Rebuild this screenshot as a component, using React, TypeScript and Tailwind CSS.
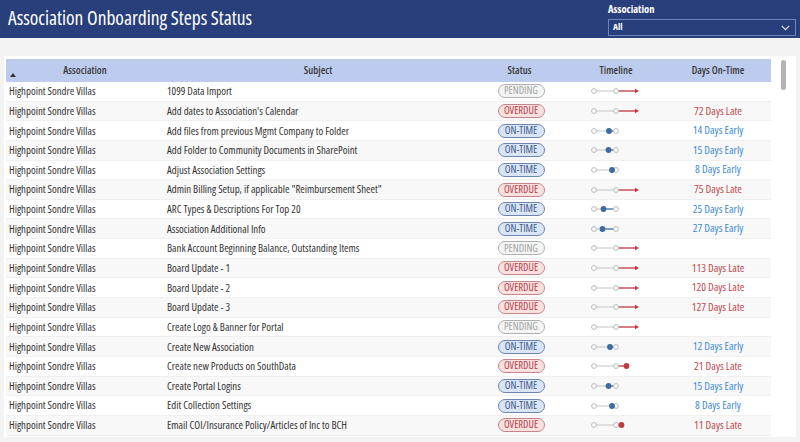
import React from 'react';

type Status = 'PENDING' | 'OVERDUE' | 'ON-TIME';

type Step = {
  subject: string;
  status: Status;
  // days relative to due date: negative = early, positive = late, null = not done
  days: number | null;
  label: string;
};

const steps: Step[] = [
  { subject: '1099 Data Import', status: 'PENDING', days: null, label: '' },
  { subject: "Add dates to Association's Calendar", status: 'OVERDUE', days: null, label: '72 Days Late' },
  { subject: 'Add files from previous Mgmt Company to Folder', status: 'ON-TIME', days: -14, label: '14 Days Early' },
  { subject: 'Add Folder to Community Documents in SharePoint', status: 'ON-TIME', days: -15, label: '15 Days Early' },
  { subject: 'Adjust Association Settings', status: 'ON-TIME', days: -8, label: '8 Days Early' },
  { subject: 'Admin Billing Setup, if applicable "Reimbursement Sheet"', status: 'OVERDUE', days: null, label: '75 Days Late' },
  { subject: 'ARC Types & Descriptions For Top 20', status: 'ON-TIME', days: -25, label: '25 Days Early' },
  { subject: 'Association Additional Info', status: 'ON-TIME', days: -27, label: '27 Days Early' },
  { subject: 'Bank Account Beginning Balance, Outstanding Items', status: 'PENDING', days: null, label: '' },
  { subject: 'Board Update - 1', status: 'OVERDUE', days: null, label: '113 Days Late' },
  { subject: 'Board Update - 2', status: 'OVERDUE', days: null, label: '120 Days Late' },
  { subject: 'Board Update - 3', status: 'OVERDUE', days: null, label: '127 Days Late' },
  { subject: 'Create Logo & Banner for Portal', status: 'PENDING', days: null, label: '' },
  { subject: 'Create New Association', status: 'ON-TIME', days: -12, label: '12 Days Early' },
  { subject: 'Create new Products on SouthData', status: 'OVERDUE', days: 21, label: '21 Days Late' },
  { subject: 'Create Portal Logins', status: 'ON-TIME', days: -15, label: '15 Days Early' },
  { subject: 'Edit Collection Settings', status: 'ON-TIME', days: -8, label: '8 Days Early' },
  { subject: 'Email COI/Insurance Policy/Articles of Inc to BCH', status: 'OVERDUE', days: 11, label: '11 Days Late' },
];

const pillStyles: Record<Status, string> = {
  PENDING: 'bg-[#f4f4f4] border-[#b0b0b0] text-[#a3a3a3]',
  OVERDUE: 'bg-[#fbe0e0] border-[#c5858a] text-[#b0434a]',
  'ON-TIME': 'bg-[#d9e4f4] border-[#6d86b1] text-[#3c5c8c]',
};

function Timeline({ days }: { days: number | null }) {
  const start = 27;
  const due = 49;
  const y = 6;
  const blue = '#3d6b9f';
  const red = '#c0393f';

  if (days === null) {
    return (
      <svg width="98" height="12" className="block">
        <line x1={start + 2.5} y1={y} x2={due - 2.5} y2={y} stroke="#c4c4c4" strokeWidth="1" />
        <line x1={due + 2.5} y1={y} x2={69} y2={y} stroke={red} strokeWidth="1.3" />
        <polygon points={`68,${y - 2.2} 72,${y} 68,${y + 2.2}`} fill={red} />
        <circle cx={start} cy={y} r="2.4" fill="white" stroke="#b0b0b0" strokeWidth="0.9" />
        <circle cx={due} cy={y} r="2.4" fill="white" stroke="#b0b0b0" strokeWidth="0.9" />
      </svg>
    );
  }

  const pos = due + days * 0.5;
  if (days < 0) {
    return (
      <svg width="98" height="12" className="block">
        <line x1={start + 2.5} y1={y} x2={pos} y2={y} stroke="#c4c4c4" strokeWidth="1" />
        <line x1={pos} y1={y} x2={due - 2.5} y2={y} stroke={blue} strokeWidth="1.3" />
        <circle cx={start} cy={y} r="2.4" fill="white" stroke="#b0b0b0" strokeWidth="0.9" />
        <circle cx={due} cy={y} r="2.4" fill="white" stroke="#b0b0b0" strokeWidth="0.9" />
        <circle cx={pos} cy={y} r="2.9" fill={blue} />
      </svg>
    );
  }

  return (
    <svg width="98" height="12" className="block">
      <line x1={start + 2.5} y1={y} x2={due - 2.5} y2={y} stroke="#c4c4c4" strokeWidth="1" />
      <line x1={due + 2.5} y1={y} x2={pos} y2={y} stroke={red} strokeWidth="1.3" />
      <circle cx={start} cy={y} r="2.4" fill="white" stroke="#b0b0b0" strokeWidth="0.9" />
      <circle cx={due} cy={y} r="2.4" fill="white" stroke="#b0b0b0" strokeWidth="0.9" />
      <circle cx={pos} cy={y} r="2.9" fill={red} />
    </svg>
  );
}

export default function App() {
  return (
    <div className="h-[442px] w-[800px] overflow-hidden bg-[#f3f3f3] font-['Open_Sans',sans-serif] font-stretch-condensed">
      {/* header bar */}
      <div className="flex h-[38px] items-start justify-between bg-[#283f7b] pl-2 pr-1">
        <h1 className="mt-[5px] text-[19.5px] leading-[26px] text-white">Association Onboarding Steps Status</h1>
        <div className="mt-[2px] flex w-[188px] flex-col">
          <span className="text-[10.5px] font-bold leading-[14px] text-white">Association</span>
          <div className="mt-[3px] flex h-[17px] items-center justify-between border border-[#6c83b9] px-1">
            <span className="text-[9.5px] font-bold text-white">All</span>
            <svg width="9" height="6" viewBox="0 0 9 6" className="mr-[1px]">
              <path d="M0.8 0.8 L4.5 4.6 L8.2 0.8" fill="none" stroke="#e8ecf5" strokeWidth="1.1" />
            </svg>
          </div>
        </div>
      </div>

      {/* table panel */}
      <div className="mx-1 mt-[18px] flex h-[381px] bg-white">
        <div className="ml-[2px] mt-[3px] w-[765px] overflow-hidden">
          <div className="grid h-[23px] grid-cols-[158px_308px_95px_98px_106px] bg-[#bdcbee] text-[10.5px] font-semibold text-[#3a3a3a]">
            <div className="relative flex items-center justify-center">
              Association
              <svg width="6" height="4" viewBox="0 0 6 4" className="absolute bottom-[5px] left-[4px]">
                <polygon points="0,4 3,0 6,4" fill="#333" />
              </svg>
            </div>
            <div className="flex items-center justify-center">Subject</div>
            <div className="flex items-center justify-center">Status</div>
            <div className="flex items-center justify-center">Timeline</div>
            <div className="flex items-center justify-center">Days On-Time</div>
          </div>
          {steps.map((s, i) => (
            <div
              key={s.subject}
              className={`grid h-[19.65px] grid-cols-[158px_308px_95px_98px_106px] items-center border-b border-[#f0f0f0] text-[10.8px] text-[#333] ${
                i % 2 === 1 ? 'bg-[#f8f8f8]' : 'bg-white'
              }`}
            >
              <div className="truncate pl-[3px]">Highpoint Sondre Villas</div>
              <div className="truncate pl-[3px]">{s.subject}</div>
              <div className="flex justify-center pl-[3px]">
                <span
                  className={`flex h-[14px] w-[47px] items-center justify-center rounded-full border text-[10.5px] ${pillStyles[s.status]}`}
                >
                  {s.status}
                </span>
              </div>
              <div>
                <Timeline days={s.days} />
              </div>
              <div
                className={`text-center text-[11.2px] ${
                  s.label.includes('Late') ? 'text-[#c2474d]' : 'text-[#3d8ad6]'
                }`}
              >
                {s.label}
              </div>
            </div>
          ))}
        </div>
        {/* scrollbar */}
        <div className="ml-[10px] mt-[4px] h-[30px] w-[5px] rounded-full bg-[#b3b3b3]" />
      </div>
    </div>
  );
}
